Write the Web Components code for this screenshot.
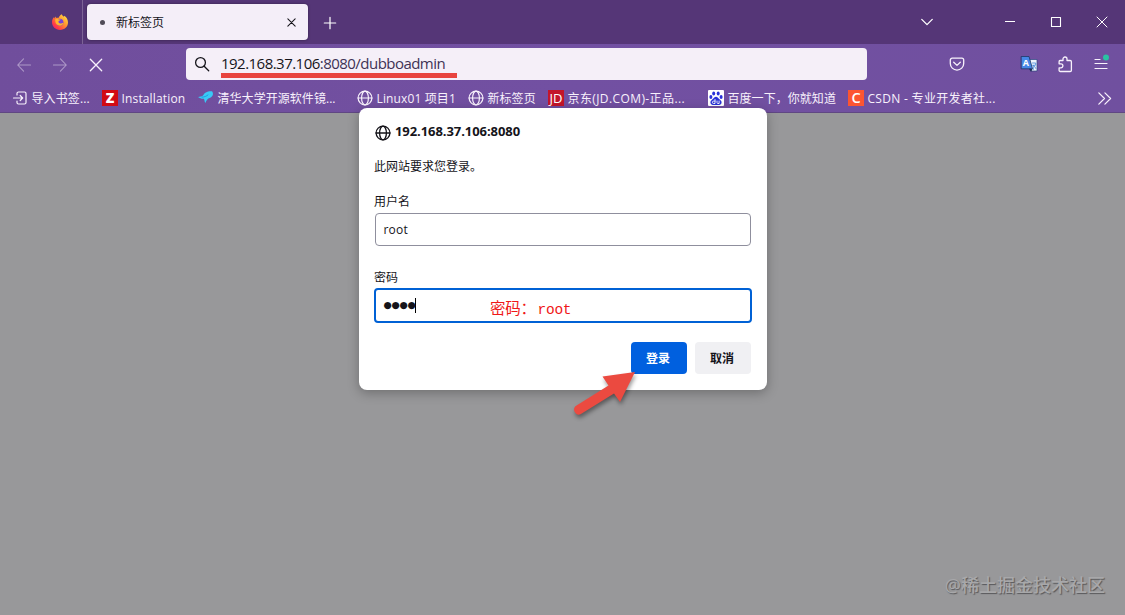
<!DOCTYPE html>
<html lang="zh-CN">
<head>
<meta charset="UTF-8">
<title>新标签页</title>
<style>
    html, body { margin: 0; height: 100%; overflow: hidden; }
    body { font-family: "Open Sans", "Noto Sans CJK SC", sans-serif; font-size: 12px; }
</style>
</head>
<body>
<browser-window>
    <tab-strip slot="tabs"><browser-tab>新标签页</browser-tab></tab-strip>
    <nav-toolbar slot="toolbar"><span slot="host">192.168.37.106</span><span slot="path">:8080/dubboadmin</span></nav-toolbar>
    <bookmarks-bar slot="bookmarks">
        <bookmark-item icon="import" style="--ls:.1px">导入书签...</bookmark-item>
        <bookmark-item icon="zed" style="--ls:.15px">Installation</bookmark-item>
        <bookmark-item icon="bird">清华大学开源软件镜...</bookmark-item>
        <bookmark-item icon="globe" style="--ls:.13px">Linux01 项目1</bookmark-item>
        <bookmark-item icon="globe">新标签页</bookmark-item>
        <bookmark-item icon="jd" style="--ls:.4px">京东(JD.COM)-正品...</bookmark-item>
        <bookmark-item icon="baidu">百度一下，你就知道</bookmark-item>
        <bookmark-item icon="csdn" style="--ls:.3px">CSDN - 专业开发者社...</bookmark-item>
    </bookmarks-bar>
    <login-dialog slot="dialog" site="192.168.37.106:8080">
        <form-field label="用户名">root</form-field>
        <form-field label="密码" password focused>●●●●<span slot="note">密码：<span style="font-size:14.500px;margin-left:2px">root</span></span></form-field>
        <dialog-button slot="actions" primary>登录</dialog-button>
        <dialog-button slot="actions">取消</dialog-button>
    </login-dialog>
    <water-mark slot="mark">@稀土掘金技术社区</water-mark>
</browser-window>

<script>
const ICONS = {
    firefox: `<defs>
        <linearGradient id="fx" x1="1" y1="0" x2="0" y2="1"><stop offset="0" stop-color="#fff44f"/><stop offset=".4" stop-color="#ff9a2e"/><stop offset=".75" stop-color="#ff3b47"/><stop offset="1" stop-color="#e3158b"/></linearGradient></defs>
        <path fill="url(#fx)" d="M9.6.2c.6 1.2 1.6 1.8 2.3 2.5l.4-1c2.300 1.300 3.700 4 3.700 6.800 0 4.300-3.500 7.400-8 7.400S0 12.700 0 8.300c0-2 .7-3.700 1.800-5l.4 1.200L3.300 2.500l.9 1.400c.8-.2 1.500-.1 2.200.2.700-1.600 1.700-3.100 3.200-3.900z"/>
        <circle cx="7.900" cy="8.200" r="3.500" fill="#7543d8"/>
        <path fill="#ffb52d" d="M3.300 5.300c1.200-.8 2.700-.6 3.700.2l1.700.1c-.4.9-1.500 1.100-2.100 1.500-.4 1.400.4 2.500 1.800 2.500 1.300.1 2.100-.8 3-.5-.8 2-2.500 2.800-4.300 2.500-2.700-.5-4.300-3-3.800-6.300z"/>`,
    close: `<path d="M3.500 3.500l9 9M12.500 3.500l-9 9"/>`,
    stop: `<path d="M1.500 1.500l13 13M14.500 1.500l-13 13"/>`,
    plus: `<path d="M8 1.500v13M1.500 8h13"/>`,
    down: `<path d="M2 5l6 6 6-6"/>`,
    minimize: `<path d="M3 7.500h10" shape-rendering="crispEdges"/>`,
    maximize: `<path d="M3.500 3.500h9v9h-9z"/>`,
    winclose: `<path d="M3 3l10 10M13 3L3 13"/>`,
    back: `<path d="M15.500 8H.8M7.500 1L.8 8l6.700 7"/>`,
    forward: `<path d="M.5 8h14.700M8.500 1l6.700 7-6.700 7"/>`,
    search: `<circle cx="6.500" cy="6.500" r="4.900"/><path d="M10.200 10.200l4.500 4.500"/>`,
    pocket: `<path d="M3.200 2.200h9.600a1.900 1.900 0 0 1 1.900 1.900v3.300a6.700 6.700 0 0 1-13.400 0V4.100a1.900 1.900 0 0 1 1.900-1.900zM4.700 6.300L8 9.400l3.300-3.100"/>`,
    puzzle: `<path d="M3 4.500h3V3a2 2 0 0 1 4 0v1.500h3.200c.7 0 1.200.5 1.200 1.200v8.600c0 .7-.5 1.200-1.200 1.200H3.300c-.7 0-1.200-.5-1.200-1.200v-2.500h1.800a2 2 0 0 0 0-4H2.100V5.700c0-.7.400-1.200.9-1.200z"/>`,
    menu: `<path d="M2 3.500h5M2 7.500h12M2 12.500h12"/><circle cx="13" cy="1.500" r="3" fill="#2ac3a2" stroke="none"/>`,
    more: `<path d="M1 1l7 7-7 7M8.500 1l7 7-7 7"/>`,
    import: `<path d="M5 5V3.500C5 2.700 5.700 2 6.500 2h6c.8 0 1.500.7 1.500 1.500v9c0 .8-.7 1.500-1.500 1.500h-6c-.8 0-1.500-.7-1.500-1.500V11M1.500 8h9M8.200 5.500L10.700 8l-2.500 2.500"/>`,
    globe: `<circle cx="8" cy="8" r="6.900"/><ellipse cx="8" cy="8" rx="3.400" ry="6.900"/><path d="M1 8h14"/>`,
    bird: `<path fill="#39c9f7" stroke="none" d="M0 7c2-.4 3.500-.2 5-1.500C6.500 3 9 1 14 1.300c1 1.300 1.500 3.200.3 4.800-1.500 2-3.800 2.100-5 3.400C8.200 10.800 8 12 7.300 13c-.8-1.500-.7-3-1.400-4.300C4 8.900 2 8.500 0 7z"/><path d="M4 7.200c2.500-.1 4.500-1 6-2.300" stroke="#188fd5" stroke-width=".8"/>`,
    zed: `<rect width="16" height="16" fill="#d20b14" stroke="none"/><text x="8" y="13" text-anchor="middle" font-size="14" font-weight="800" fill="#fff" stroke="none">Z</text>`,
    jd: `<rect width="16" height="16" fill="#c3152a" stroke="none"/><text x="8" y="12.500" text-anchor="middle" font-size="12.500" font-weight="500" textLength="13" lengthAdjust="spacingAndGlyphs" fill="#fff" stroke="none">JD</text>`,
    csdn: `<rect width="16" height="16" fill="#fc5531" stroke="none"/><text x="8" y="13" text-anchor="middle" font-size="14.500" font-weight="600" fill="#fff" stroke="none">C</text>`,
    baidu: `<rect width="16" height="16" rx="1" fill="#fff" stroke="none"/><g fill="#2932d8" stroke="none"><ellipse cx="2.900" cy="7" rx="1.500" ry="2"/><ellipse cx="5.700" cy="3.500" rx="1.500" ry="2"/><ellipse cx="10.200" cy="3.500" rx="1.500" ry="2"/><ellipse cx="13.100" cy="7" rx="1.500" ry="2"/><path d="M8 6.800c1.700 0 2.300 1.500 3.500 2.500 1.500 1.200 2.400 2.300 2 3.800-.5 2-2.100 2.200-5.500 1.900-3.400.3-5 .1-5.500-1.900-.4-1.500.5-2.600 2-3.800C5.700 8.300 6.300 6.800 8 6.800z"/></g><path stroke="#fff" stroke-width=".9" d="M7 9.500v4H5.600a1.200 1.200 0 0 1 0-2.400H7M9 11v1.600c0 .6.400.9.900.9h1.200V11"/>`,
    translate: `<path fill="#eef3fc" stroke="#2a4480" stroke-width=".7" d="M8 3.500h8V15h-5.500z"/><path d="M11.500 7h3.200v2.200l-3 .1M12.300 9.500v4M13 9.500l1.800 3" stroke="#4285d8" stroke-width=".8"/><path fill="#4687e6" stroke="#1d3767" stroke-width=".8" d="M.5.500H8l3.500 12.300H.5z"/><path fill="#1c3158" stroke="none" d="M8 12.800h3.500L10 16z"/><text x="4.900" y="9.700" text-anchor="middle" font-size="9" font-weight="700" fill="#fff" stroke="none">A</text>`
};

class BaseElement extends HTMLElement {
    constructor() {
        super();
        this.attachShadow({ mode: 'open' });
    }

    connectedCallback() {
        this.shadowRoot.innerHTML = this.render();
    }
}

// Line icons use the inherited text colour
class UiIcon extends BaseElement {
    render() {
        const size = this.getAttribute('size') || 16;
        const weight = this.getAttribute('weight') || 1.2;
        return `
        <style>
            :host { display: block; flex: none; width: ${size}px; height: ${size}px; letter-spacing: 0; }
            svg { display: block; overflow: visible; }
        </style>
        <svg width="${size}" height="${size}" viewBox="0 0 16 16" fill="none" stroke="currentColor" stroke-width="${weight}" stroke-linecap="round" stroke-linejoin="round">
            <g ${this.getAttribute('name') === 'firefox' ? 'stroke="none"' : ''}>${ICONS[this.getAttribute('name')]}</g>
        </svg>`;
    }
}
customElements.define('ui-icon', UiIcon);

class BrowserWindow extends BaseElement {
    render() {
        return `
        <style>
            :host { display: flex; flex-direction: column; position: relative; height: 615px; background: #98989a; overflow: hidden; }
            .chrome { background: linear-gradient(100deg, #704e9c, #7250a2 50%, #70509f); height: 68px; border-bottom: 1px solid #604783; }
            main { flex: 1; }
            .dialog { position: absolute; left: 359px; top: 108px; }
            .arrow { position: absolute; left: 565px; top: 362px; overflow: visible; filter: drop-shadow(1px 3px 2px rgba(0,0,0,.4)); }
            .mark { position: absolute; right: 20px; bottom: 17px; }
        </style>
        <slot name="tabs"></slot>
        <div class="chrome">
            <slot name="toolbar"></slot>
            <slot name="bookmarks"></slot>
        </div>
        <main></main>
        <div class="dialog"><slot name="dialog"></slot></div>
        <svg class="arrow" width="80" height="60"><path fill="#eb4a40" d="M70 10L37.500 14.500l6 9L11.500 43.500a4.500 4.500 0 0 0-2 6c1.200 2.300 3.500 4 6 2.700L49 31.500l6 8.500z"/></svg>
        <div class="mark"><slot name="mark"></slot></div>`;
    }
}
customElements.define('browser-window', BrowserWindow);

class TabStrip extends BaseElement {
    render() {
        return `
        <style>
            :host { display: flex; align-items: center; box-sizing: border-box; height: 44px; background: #553677; color: #fff; }
            .home { display: flex; align-items: center; justify-content: flex-end; box-sizing: border-box; width: 83px; height: 44px; padding-right: 14px; border-right: 1px solid #7c6395; margin-right: 4px; }
            .plus { margin: 1px 0 0 15px; }
            .controls { display: flex; align-items: center; margin-left: auto; padding-right: 15px; }
            .controls ui-icon { margin-left: 30px; }
            .controls .list { margin: 0 40px 0 0; }
        </style>
        <div class="home"><ui-icon name="firefox"></ui-icon></div>
        <slot></slot>
        <ui-icon class="plus" name="plus" size="14" weight="1.4"></ui-icon>
        <div class="controls">
            <ui-icon class="list" name="down" size="14" weight="1.5"></ui-icon>
            <ui-icon style="margin-left:28px" name="minimize" weight="1"></ui-icon>
            <ui-icon name="maximize" weight="1.1"></ui-icon>
            <ui-icon name="winclose" weight="1"></ui-icon>
        </div>`;
    }
}
customElements.define('tab-strip', TabStrip);

class BrowserTab extends BaseElement {
    render() {
        return `
        <style>
            :host { display: flex; align-items: center; box-sizing: border-box; width: 221px; height: 36px; padding: 0 10px 0 13px; border-radius: 4px; background: #f4eef8; color: #15141a; box-shadow: 0 0 3px rgba(0,0,0,.4); }
            .dot { width: 5px; height: 5px; margin-right: 11px; border-radius: 50%; background: #504b57; }
            .title { flex: 1; padding-top: 2px; line-height: 18px; }
        </style>
        <span class="dot"></span>
        <span class="title"><slot></slot></span>
        <ui-icon name="close" size="13" weight="1.3"></ui-icon>`;
    }
}
customElements.define('browser-tab', BrowserTab);

class NavToolbar extends BaseElement {
    render() {
        return `
        <style>
            :host { display: flex; align-items: center; box-sizing: border-box; height: 40px; padding: 0 16px 0 17px; color: #f8f2fc; }
            .nav { display: flex; align-items: center; gap: 22px; width: 169px; margin-top: 2px; }
            .dim { opacity: .45; }
            .url { display: flex; align-items: center; box-sizing: border-box; width: 681px; height: 32px; padding-left: 8px; border-radius: 4px; background: #f5eff8; color: #15141a; }
            .address { position: relative; margin-left: 11px; font-size: 15px; line-height: 20px; letter-spacing: -.53px; white-space: nowrap; }
            .address::after { content: ""; position: absolute; left: 0; top: 19px; width: 236px; height: 5px; background: #e8443f; }
            .text { position: relative; top: -1px; }
            .path { color: #403255; }
            .tools { display: flex; align-items: center; margin-left: auto; }
        </style>
        <div class="nav">
            <ui-icon class="dim" name="back" size="14"></ui-icon>
            <ui-icon class="dim" name="forward" size="14"></ui-icon>
            <ui-icon name="stop" size="14" weight="1.5"></ui-icon>
        </div>
        <div class="url">
            <ui-icon name="search" weight="1.3"></ui-icon>
            <div class="address"><span class="text"><slot name="host"></slot><span class="path"><slot name="path"></slot></span></span></div>
        </div>
        <div class="tools">
            <ui-icon style="margin-right:56px" name="pocket" weight="1.3"></ui-icon>
            <ui-icon style="margin-right:20px" name="translate"></ui-icon>
            <ui-icon style="margin-right:20px" name="puzzle" weight="1.3"></ui-icon>
            <ui-icon name="menu" weight="1.2"></ui-icon>
        </div>`;
    }
}
customElements.define('nav-toolbar', NavToolbar);

class BookmarksBar extends BaseElement {
    render() {
        return `
        <style>
            :host { display: flex; align-items: center; height: 28px; padding: 0 14px 0 12px; color: #f8f1fc; }
            .items { display: grid; grid-template-columns: 90px 96px 159px 111px 80px 160px 140px 160px; }
            ui-icon { margin-left: auto; }
        </style>
        <div class="items"><slot></slot></div>
        <ui-icon name="more" size="13" weight="1.5"></ui-icon>`;
    }
}
customElements.define('bookmarks-bar', BookmarksBar);

class BookmarkItem extends BaseElement {
    render() {
        return `
        <style>
            :host { display: flex; align-items: center; gap: 3.500px; height: 18px; line-height: 18px; letter-spacing: var(--ls, 0.05px); white-space: nowrap; }
            span { padding-top: 2px; }
        </style>
        <ui-icon name="${this.getAttribute('icon')}"></ui-icon>
        <span><slot></slot></span>`;
    }
}
customElements.define('bookmark-item', BookmarkItem);

class LoginDialog extends BaseElement {
    render() {
        return `
        <style>
            :host { display: block; box-sizing: border-box; width: 408px; height: 282px; padding: 16px; border-radius: 8px; background: #fff; color: #15141a; box-shadow: 0 3px 12px rgba(0,0,0,.28); }
            .site { display: flex; align-items: center; gap: 4px; height: 17px; font-size: 13px; font-weight: 700; line-height: 17px; letter-spacing: -.07px; }
            .site span { padding-bottom: 2px; }
            p { margin: 17px 0 16px -1px; line-height: 18px; }
            .actions { display: flex; justify-content: flex-end; gap: 8px; margin-top: 19px; }
        </style>
        <div class="site"><ui-icon name="globe" weight="1.3"></ui-icon><span>${this.getAttribute('site')}</span></div>
        <p>此网站要求您登录。</p>
        <slot></slot>
        <div class="actions"><slot name="actions"></slot></div>`;
    }
}
customElements.define('login-dialog', LoginDialog);

class FormField extends BaseElement {
    render() {
        return `
        <style>
            :host { display: block; height: 76px; }
            :host([password]) { height: 55px; }
            label { display: block; box-sizing: border-box; height: 18px; margin: 0 0 3px -1px; padding-top: 1px; line-height: 18px; }
            .box { display: flex; align-items: center; position: relative; box-sizing: border-box; height: 33px; padding-left: 7.500px; border: 1px solid #8f8f9d; border-radius: 4px; }
            .value { letter-spacing: .2px; }
            :host([focused]) .box { height: 35px; margin: -1px; border: 2px solid #0061d5; }
            :host([password]) .value { position: relative; top: -1px; font: 9.500px/16px "DejaVu Sans", sans-serif; letter-spacing: -.3px; }
            .caret { display: none; width: 1px; height: 15px; background: #000; }
            :host([focused]) .caret { display: block; }
            .note { position: absolute; left: 114px; top: 9px; color: #f01818; font: 15.500px/22px "Liberation Mono", "Noto Sans CJK SC", monospace; white-space: nowrap; letter-spacing: -.3px; }
        </style>
        <label>${this.getAttribute('label')}</label>
        <div class="box">
            <span class="value"><slot></slot></span><i class="caret"></i>
            <span class="note"><slot name="note"></slot></span>
        </div>`;
    }
}
customElements.define('form-field', FormField);

class DialogButton extends BaseElement {
    render() {
        return `
        <style>
            :host { display: flex; align-items: center; justify-content: center; box-sizing: border-box; width: 56px; height: 32px; padding-right: 2px; border-radius: 4px; background: #f0f0f3; font-weight: 700; }
            :host([primary]) { background: #0060df; color: #fff; }
        </style>
        <slot></slot>`;
    }
}
customElements.define('dialog-button', DialogButton);

class WaterMark extends BaseElement {
    render() {
        return `
        <style>
            :host { display: block; color: #a8a8aa; font-size: 18px; font-weight: 500; line-height: 26px; text-shadow: 1px 1px 1px #58585b; white-space: nowrap; }
        </style>
        <slot></slot>`;
    }
}
customElements.define('water-mark', WaterMark);
</script>
</body>
</html>
